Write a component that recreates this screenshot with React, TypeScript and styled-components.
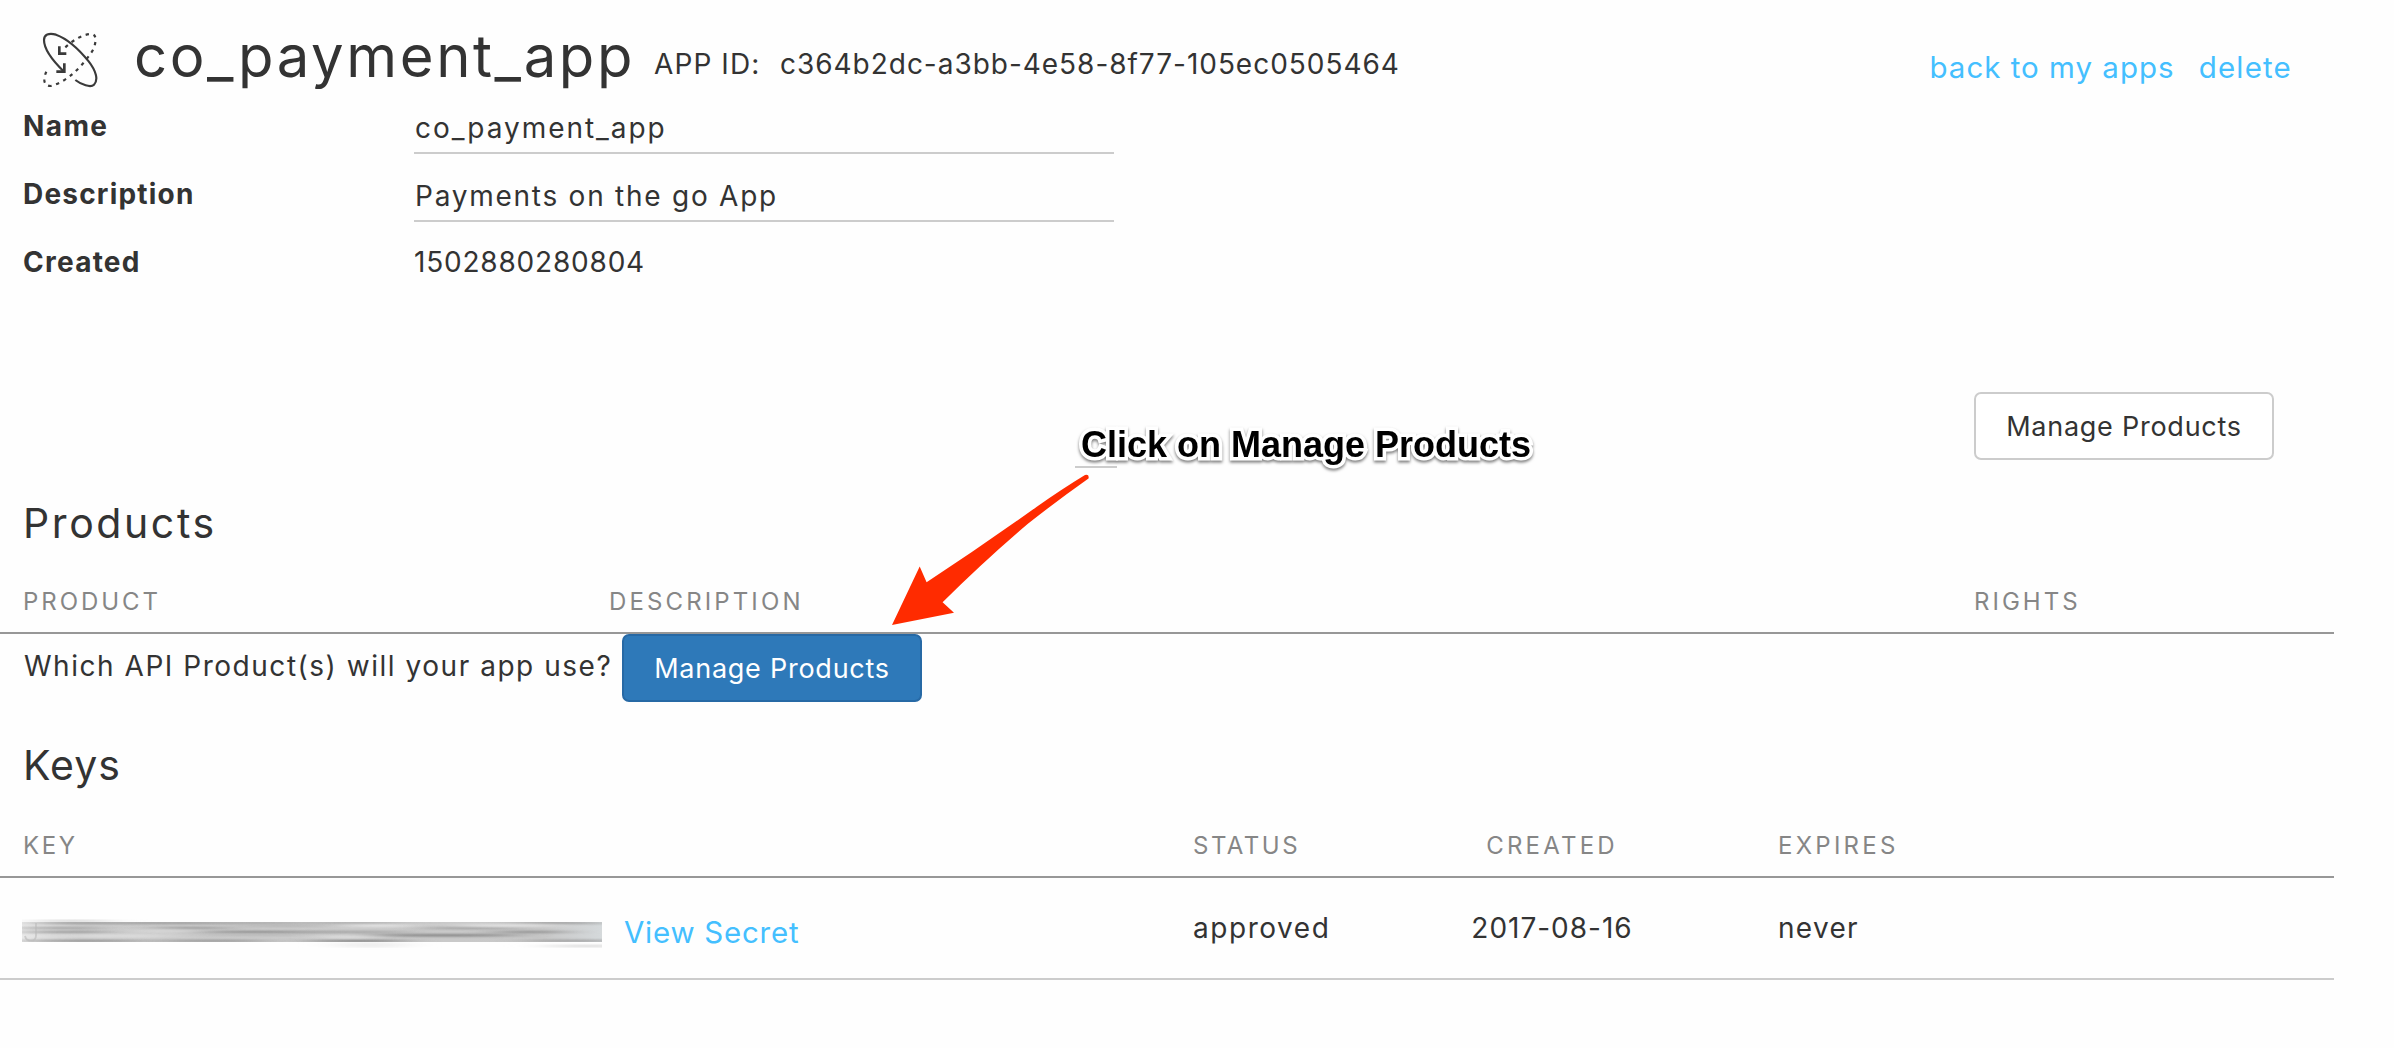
import React from "react";
import styled, { createGlobalStyle } from "styled-components";

const GlobalStyle = createGlobalStyle`
  *, *::before, *::after { box-sizing: border-box; }
  html, body { margin: 0; padding: 0; background: #fefefe; }
  body {
    font-family: Inter, "Open Sans", "Liberation Sans", sans-serif;
    font-size: 28px;
    color: #333;
    overflow: hidden;
  }
`;

type Spaced = { $ls?: number };

const Page = styled.main`
  position: relative;
  width: 2334px;
  height: 1048px;
  display: flex;
  flex-direction: column;
`;

const Text = styled.span<Spaced>`
  letter-spacing: ${(p) => p.$ls ?? 1.5}px;
  white-space: nowrap;
`;

/* ---------- header ---------- */

const Header = styled.header`
  display: flex;
  align-items: center;
  height: 112px;
  padding: 0 42px;
`;

const LogoIcon = styled.svg`
  width: 56px;
  height: 56px;
  margin-top: 8px;
  flex: none;
  fill: none;
  stroke: #3a3a3a;
  stroke-width: 6.5;
`;

const Title = styled.h1`
  margin: 0 0 0 36px;
  width: 520px;
  font-size: 58px;
  font-weight: 400;
  line-height: 66px;
  letter-spacing: 2.6px;
  white-space: nowrap;
`;

const AppId = styled.div`
  display: flex;
  margin-top: 16px;
  line-height: 32px;
`;

const AppIdLabel = styled(Text)`
  width: 126px;
`;

const HeaderLinks = styled.nav`
  display: flex;
  gap: 24px;
  margin: 22px 0 0 auto;
  line-height: 34px;
`;

const Link = styled.a<Spaced>`
  color: #44bfff;
  font-size: 29.5px;
  letter-spacing: ${(p) => p.$ls ?? 1.2}px;
  text-decoration: none;
  white-space: nowrap;
  cursor: pointer;
`;

/* ---------- details ---------- */

const Details = styled.dl`
  margin: 0;
  display: grid;
  grid-template-columns: 390px 700px;
  grid-auto-rows: 68px;
  padding-left: 24px;
  height: 280px;
`;

const Label = styled.dt<Spaced>`
  margin-left: -1px;
  font-weight: 700;
  line-height: 29px;
  letter-spacing: ${(p) => p.$ls ?? 1.5}px;
`;

const Value = styled.dd<{ $editable?: boolean } & Spaced>`
  margin: 0;
  height: 42px;
  line-height: ${(p) => (p.$editable ? 33 : 29)}px;
  padding-left: ${(p) => (p.$editable ? 1 : 0)}px;
  letter-spacing: ${(p) => p.$ls ?? 1.8}px;
  border-bottom: ${(p) => (p.$editable ? "2px solid #ccc" : "none")};
`;

/* ---------- buttons ---------- */

const Actions = styled.div`
  display: flex;
  justify-content: flex-end;
  padding-right: 60px;
`;

const Button = styled.button<{ $primary?: boolean }>`
  width: 300px;
  height: 68px;
  padding: 1px 0 0;
  border: 2px solid ${(p) => (p.$primary ? "#2769a5" : "#ccc")};
  border-radius: 7px;
  background: ${(p) => (p.$primary ? "#2e79b9" : "#fff")};
  color: ${(p) => (p.$primary ? "#fff" : "#333")};
  font: inherit;
  font-size: 27px;
  letter-spacing: 0.75px;
  cursor: pointer;
`;

/* ---------- tables ---------- */

const Section = styled.section<{ $top: number }>`
  margin-top: ${(p) => p.$top}px;
`;

const Heading = styled.h2<Spaced>`
  margin: 0;
  padding-left: 23px;
  font-size: 41px;
  font-weight: 400;
  line-height: 47px;
  height: 48px;
  letter-spacing: ${(p) => p.$ls ?? 2.6}px;
`;

const HeadRow = styled.div<{ $columns: string; $top: number }>`
  display: grid;
  grid-template-columns: ${(p) => p.$columns};
  align-items: center;
  height: 64px;
  margin-top: ${(p) => p.$top}px;
  padding: 2px 0 0 23px;
  border-bottom: 2px solid #979797;
  color: #868686;
  font-size: 24px;
  line-height: 28px;
`;

const PromptRow = styled.div`
  display: flex;
  align-items: center;
  height: 68px;
  padding-left: 24px;
`;

const Prompt = styled(Text)`
  width: 598px;
  margin-bottom: 4px;
`;

const KeyRow = styled.div<{ $columns: string }>`
  display: grid;
  grid-template-columns: ${(p) => p.$columns};
  align-items: center;
  height: 102px;
  padding-left: 23px;
  border-bottom: 2px solid #ccc;
`;

const Centered = styled(Text)`
  text-align: center;
`;

const KeyCell = styled.div`
  display: flex;
  align-items: center;
  margin: 7px 0 0 -1px;
  gap: 22px;
`;

const HiddenKey = styled.svg`
  width: 580px;
  height: 34px;
  flex: none;
  margin-top: 2px;
`;

/* ---------- annotation ---------- */

const Annotation = styled.div`
  position: absolute;
  left: 1081px;
  top: 424px;
  font-family: "Liberation Sans", Arial, sans-serif;
  font-size: 36px;
  font-weight: 700;
  line-height: 42px;
  color: #000;
  white-space: nowrap;
  -webkit-text-stroke: 7px #fff;
  paint-order: stroke fill;
  filter: drop-shadow(0 2px 1.5px rgba(0, 0, 0, 0.5));
`;

const Underline = styled.div`
  position: absolute;
  left: 1075px;
  top: 466px;
  width: 42px;
  height: 2px;
  background: #ccc;
`;

const Arrow = styled.svg`
  position: absolute;
  left: 880px;
  top: 464px;
  width: 220px;
  height: 170px;
`;

const PRODUCT_COLUMNS = "586px 1365px 1fr";
const KEY_COLUMNS = "1170px 246px 226px 113px 1fr";

/* cx, cy, rx, colour, ry */
const SMUDGES: [number, number, number, string, number][] = [
  [60, 1, 50, "#8d8d8d", 1.2],
  [150, 1, 60, "#8a8a8a", 1.1],
  [235, 1, 50, "#9c9c9c", 1.1],
  [330, 1, 50, "#a0a0a0", 1],
  [538, 1, 45, "#8a8a8a", 1.1],
  [38, 6, 45, "#929292", 1.1],
  [170, 6, 40, "#868686", 1],
  [450, 6, 50, "#8f8f8f", 1],
  [45, 10, 48, "#8a8a8a", 1.2],
  [235, 10, 65, "#7c7c7c", 1.2],
  [330, 10, 60, "#999", 1],
  [508, 10, 38, "#787878", 1],
  [420, 13.3, 82, "#6c6c6c", 1.1],
  [230, 13, 60, "#b4b4b4", 1],
  [60, 18.8, 65, "#828282", 1.1],
  [190, 18.8, 60, "#868686", 1.1],
  [335, 18.8, 50, "#6f6f6f", 1.2],
  [550, 18.8, 50, "#8f8f8f", 1.1],
  [95, 14, 55, "#dedede", 2],
  [140, 9, 35, "#dadada", 1.5],
  [355, 3.6, 38, "#f4f4f4", 1.1],
  [485, 3.5, 55, "#e6e6e6", 1.6],
  [325, 15, 28, "#e2e2e2", 2],
  [260, 4, 50, "#b0b0b0", 1.2],
];

function Scribble() {
  return (
    <HiddenKey viewBox="0 -6 580 34">
      <defs>
        <linearGradient id="edge" x1="0" x2="1" y1="0" y2="0">
          <stop offset="0" stopColor="#e9e9e9" />
          <stop offset="0.1" stopColor="#cdcdcd" />
          <stop offset="0.9" stopColor="#c8c8c8" />
          <stop offset="1" stopColor="#d5d9db" />
        </linearGradient>
        <filter id="streak" x="-50%" y="-150%" width="200%" height="400%">
          <feGaussianBlur stdDeviation="18 0.8" />
        </filter>
        <clipPath id="bar">
          <rect width="580" height="20" />
        </clipPath>
        <clipPath id="below">
          <rect y="-3" width="580" height="29" />
        </clipPath>
      </defs>
      <g clipPath="url(#below)">
        <ellipse cx="50" cy="-1" rx="40" ry="1" fill="#cfcfcf" filter="url(#streak)" />
        <ellipse cx="348" cy="23" rx="36" ry="3" fill="#efefef" filter="url(#streak)" />
        <ellipse cx="566" cy="24" rx="44" ry="1" fill="#d4d4d4" filter="url(#streak)" />
      </g>
      <g clipPath="url(#bar)">
        <rect width="580" height="20" fill="url(#edge)" />
        <g opacity="0.85">
          {SMUDGES.map(([cx, cy, rx, fill, ry], i) => (
            <ellipse key={i} cx={cx} cy={cy} rx={rx} ry={ry} fill={fill} filter="url(#streak)" />
          ))}
        </g>
      </g>
      <path d="M14 1V13.5Q14 18.6 9 18.6Q4 18.6 3 14" fill="none" stroke="#b9b9b9" strokeWidth="1.8" opacity="0.6" />
    </HiddenKey>
  );
}

export default function App() {
  return (
    <>
      <GlobalStyle />
      <Page>
        <Header>
          <LogoIcon viewBox="36 36 168 168">
            <path d="M102 155C70 124 42 88 42 60C42 44 56 38 78 44C112 56 150 92 176 124C198 152 206 180 192 194C182 204 154 194 136 180" />
            <path d="M103 130V155H79" strokeWidth="8" />
            <path d="M88 79V101H109" strokeWidth="8" />
            <path
              d="M106 82C130 60 156 44 182 42C200 42 200 62 190 88C176 112 152 140 132 158C112 176 88 192 62 198C38 198 38 172 54 146"
              strokeDasharray="10 14"
            />
          </LogoIcon>
          <Title>co_payment_app</Title>
          <AppId>
            <AppIdLabel $ls={1.1}>APP ID:</AppIdLabel>
            <Text $ls={0.97}>c364b2dc-a3bb-4e58-8f77-105ec0505464</Text>
          </AppId>
          <HeaderLinks>
            <Link $ls={1.0}>back to my apps</Link>
            <Link $ls={1.2}>delete</Link>
          </HeaderLinks>
        </Header>

        <Details>
          <Label $ls={1.4}>Name</Label>
          <Value $editable $ls={1.95}>co_payment_app</Value>
          <Label $ls={1.2}>Description</Label>
          <Value $editable $ls={1.75}>Payments on the go App</Value>
          <Label $ls={1.25}>Created</Label>
          <Value $ls={0.8}>1502880280804</Value>
        </Details>

        <Actions>
          <Button>Manage Products</Button>
        </Actions>

        <Section $top={40}>
          <Heading $ls={2.6}>Products</Heading>
          <HeadRow $columns={PRODUCT_COLUMNS} $top={22}>
            <Text $ls={2.95}>PRODUCT</Text>
            <Text $ls={3.12}>DESCRIPTION</Text>
            <Text $ls={3.0}>RIGHTS</Text>
          </HeadRow>
          <PromptRow>
            <Prompt $ls={1.53}>Which API Product(s) will your app use?</Prompt>
            <Button $primary>Manage Products</Button>
          </PromptRow>
        </Section>

        <Section $top={40}>
          <Heading $ls={1.1}>Keys</Heading>
          <HeadRow $columns={KEY_COLUMNS} $top={24}>
            <Text $ls={2.6}>KEY</Text>
            <Text $ls={2.5}>STATUS</Text>
            <Centered $ls={3.2}>CREATED</Centered>
            <span />
            <Text $ls={3.25}>EXPIRES</Text>
          </HeadRow>
          <KeyRow $columns={KEY_COLUMNS}>
            <KeyCell>
              <Scribble />
              <Link $ls={0.75}>View Secret</Link>
            </KeyCell>
            <Text $ls={1.55}>approved</Text>
            <Centered $ls={0.98}>2017-08-16</Centered>
            <span />
            <Text $ls={1.3}>never</Text>
          </KeyRow>
        </Section>

        <Annotation>Click on Manage Products</Annotation>
        <Underline />
        <Arrow viewBox="880 464 220 170">
          <path
            fill="#ff2b00"
            d="M892 625L919.7 566.5L926.6 582.3Q982 546 1036.8 506.7Q1062 489 1085 475Q1089.5 474 1088.5 478.5Q1058 500 1027.6 524Q984 561 942.6 602.3L954 612.7Z"
          />
        </Arrow>
      </Page>
    </>
  );
}
